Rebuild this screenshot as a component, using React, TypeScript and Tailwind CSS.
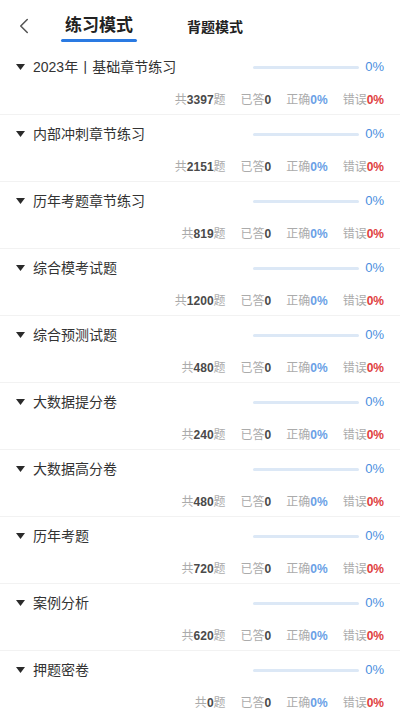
import { ChevronLeft } from 'lucide-react';

const chapters = [
  { title: '2023年丨基础章节练习', total: 3397 },
  { title: '内部冲刺章节练习', total: 2151 },
  { title: '历年考题章节练习', total: 819 },
  { title: '综合模考试题', total: 1200 },
  { title: '综合预测试题', total: 480 },
  { title: '大数据提分卷', total: 240 },
  { title: '大数据高分卷', total: 480 },
  { title: '历年考题', total: 720 },
  { title: '案例分析', total: 620 },
  { title: '押题密卷', total: 0 },
];

function ChapterRow({ title, total }: { title: string; total: number }) {
  return (
    <div className="h-[67px] border-b border-[#f2f2f2] pl-[16px] pr-[16px]">
      {/* 标题与进度 */}
      <div className="flex h-[38px] items-center">
        <svg width="9" height="6" viewBox="0 0 9 6" className="mr-[8px] shrink-0">
          <path d="M0 0 L9 0 L4.5 6 Z" fill="#2a2a2a" />
        </svg>
        <span className="flex-1 text-[14px] text-[#333333]">{title}</span>
        <div className="h-[3px] w-[106px] rounded-full bg-[#dce8f6]" />
        <span className="ml-[6px] w-[19px] text-right text-[13px] text-[#4a8fe0]">0%</span>
      </div>
      {/* 统计 */}
      <div className="flex h-[28px] items-center justify-end gap-[15px] text-[12px] text-[#ababab]">
        <span>
          共<span className="font-bold text-[#4a4a4a]">{total}</span>题
        </span>
        <span>
          已答<span className="font-bold text-[#4a4a4a]">0</span>
        </span>
        <span>
          正确<span className="font-bold text-[#6a9fe6]">0%</span>
        </span>
        <span>
          错误<span className="font-bold text-[#e04040]">0%</span>
        </span>
      </div>
    </div>
  );
}

export default function App() {
  return (
    <div
      className="h-[712px] w-[400px] overflow-hidden bg-white"
      style={{ fontFamily: '"Liberation Sans", "Noto Sans CJK SC", sans-serif' }}
    >
      {/* 顶部标签 */}
      <div className="flex h-[48px] items-start pt-[14px]">
        <ChevronLeft size={26} strokeWidth={1.4} className="ml-[11px] mt-[-1px] text-[#555555]" />
        <div className="ml-[24px] flex flex-col items-center">
          <span className="text-[17px] font-bold leading-[24px] text-[#222222]">练习模式</span>
          <div className="mt-[1px] h-[3px] w-[76px] rounded-full bg-[#2a7ae2]" />
        </div>
        <span className="ml-[50px] mt-[2px] text-[14px] font-bold leading-[22px] text-[#222222]">背题模式</span>
      </div>
      {chapters.map((c) => (
        <ChapterRow key={c.title} title={c.title} total={c.total} />
      ))}
    </div>
  );
}
